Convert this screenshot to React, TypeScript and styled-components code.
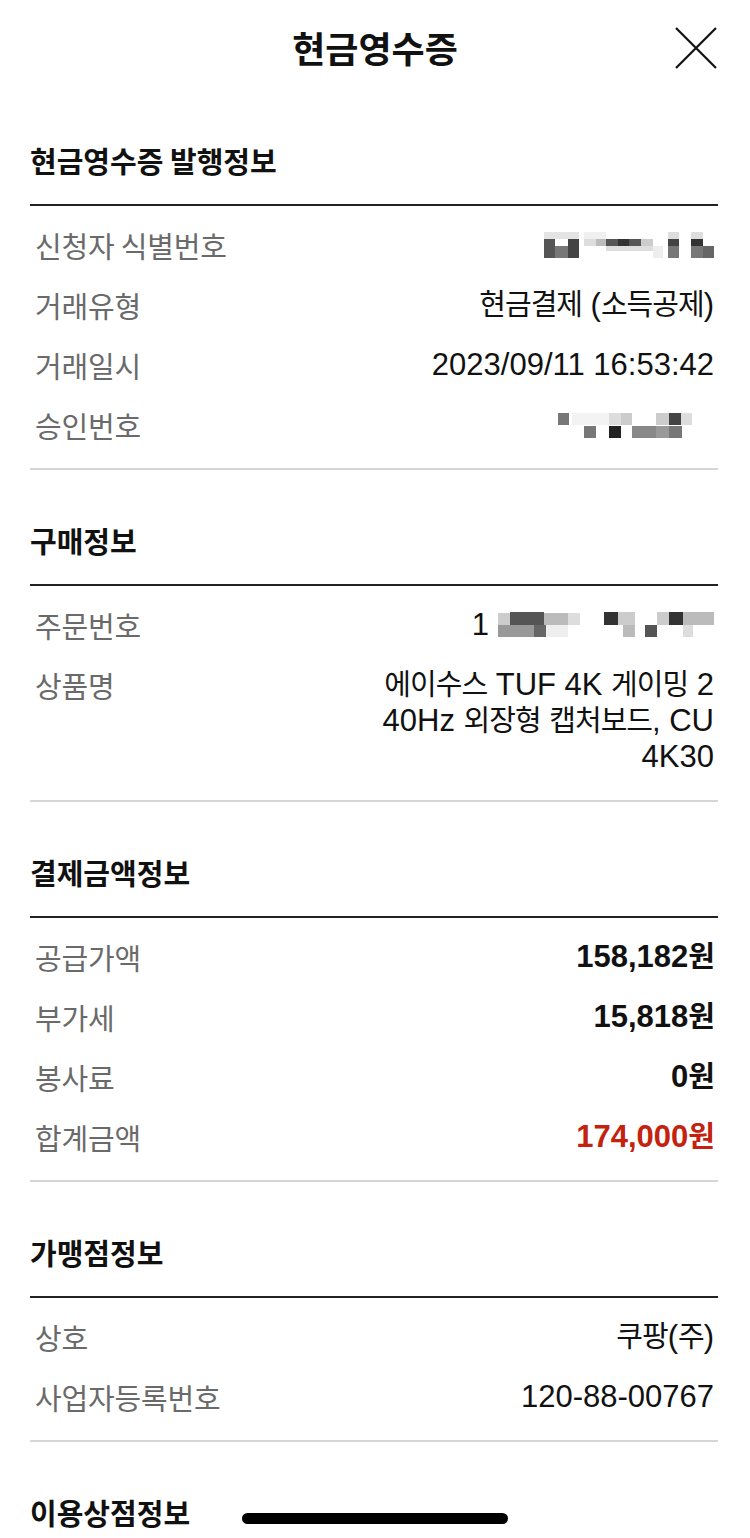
import React from "react";
import styled, { createGlobalStyle } from "styled-components";

const Global = createGlobalStyle`
  html, body { margin: 0; padding: 0; background: #fff; }
  body { font-family: "Noto Sans CJK KR", "Noto Sans", sans-serif; color: #111; }
  * { box-sizing: border-box; }
`;

const Page = styled.div`
  width: 750px;
  min-height: 1538px;
  background: #fff;
`;

const Header = styled.header`
  height: 90px;
  display: flex;
  align-items: center;
  justify-content: center;
  position: relative;
`;

const Title = styled.h1`
  margin: 0;
  font-family: "Noto Sans CJK KR", sans-serif;
  font-weight: 700;
  font-size: 36px;
  letter-spacing: 0;
  line-height: 44px;
  color: #111;
  margin-top: 4px;
`;

const CloseButton = styled.button`
  position: absolute;
  right: 32px;
  top: 26px;
  width: 44px;
  height: 44px;
  padding: 0;
  border: 0;
  background: transparent;
  display: flex;
  align-items: center;
  justify-content: center;
`;

const Section = styled.section`
  margin: 0 32px 0 30px;
  padding-top: 50px;
`;

const SectionTitle = styled.h2`
  margin: 0;
  font-family: "Noto Sans CJK KR", sans-serif;
  font-weight: 700;
  font-size: 29px;
  letter-spacing: 0;
  line-height: 40px;
  height: 66px;
  padding-bottom: 24px;
  border-bottom: 2px solid #222;
  color: #111;
`;

const RowList = styled.div<{ $last?: boolean }>`
  padding: 9px 0 13px;
  border-bottom: ${(p) => (p.$last ? "none" : "2px solid #d6d6d6")};
`;

const Row = styled.div`
  display: flex;
  justify-content: space-between;
  align-items: flex-start;
  padding: 12px 4px 12px 5px;
  line-height: 36px;
`;

const Label = styled.span`
  display: block;
  height: 36px;
  font-family: "Noto Sans CJK KR", sans-serif;
  font-size: 29px;
  line-height: 36px;
  letter-spacing: -0.2px;
  color: #6a6a6a;
  white-space: nowrap;
`;

const Value = styled.span<{ $bold?: boolean; $red?: boolean }>`
  font-family: "Liberation Sans", "Noto Sans CJK KR", sans-serif;
  font-size: 31px;
  font-weight: ${(p) => (p.$bold ? 700 : 400)};
  color: ${(p) => (p.$red ? "#c4220e" : "#111")};
  text-align: right;
  display: flex;
  flex-direction: column;
  align-items: flex-end;
`;

const Line = styled.span`
  display: block;
  height: 36px;
  line-height: 36px;
  white-space: nowrap;
`;

const Ko = styled.span`
  font-family: "Noto Sans CJK KR", sans-serif;
  font-size: 29px;
  letter-spacing: -1px;
  line-height: 1;
`;

const Masked = styled.span`
  display: flex;
  align-items: center;
  gap: 9px;
  height: 36px;
`;

const HomeIndicator = styled.div`
  position: fixed;
  left: 242px;
  bottom: 14px;
  width: 266px;
  height: 11px;
  border-radius: 6px;
  background: #000;
`;

type R = [number, number, number, number, string];

const Pixels: React.FC<{ w: number; h: number; rects: R[] }> = ({ w, h, rects }) => (
  <svg width={w} height={h} viewBox={`0 0 ${w} ${h}`} style={{ display: "block" }}>
    {rects.map(([x, y, rw, rh, c], i) => (
      <rect key={i} x={x} y={y} width={rw} height={rh} fill={c} />
    ))}
  </svg>
);

const idRects: R[] = [
  [0, 0, 35, 7, "#e4e4e4"],
  [40, 0, 22, 7, "#f0f0f0"],
  [0, 7, 11, 19, "#555"],
  [11, 14, 13, 12, "#777"],
  [24, 7, 11, 19, "#444"],
  [40, 7, 12, 7, "#ddd"],
  [52, 7, 10, 7, "#bbb"],
  [62, 7, 12, 7, "#555"],
  [74, 7, 11, 7, "#333"],
  [85, 7, 12, 7, "#555"],
  [97, 7, 12, 7, "#ccc"],
  [62, 14, 47, 5, "#ddd"],
  [109, 14, 10, 12, "#eee"],
  [124, 0, 11, 7, "#ddd"],
  [124, 7, 11, 7, "#444"],
  [124, 14, 11, 12, "#777"],
  [147, 0, 12, 7, "#ddd"],
  [147, 7, 12, 7, "#333"],
  [147, 14, 12, 12, "#777"],
  [159, 14, 11, 12, "#666"],
];

const approvalRects: R[] = [
  [0, 0, 11, 12, "#777"],
  [14, 0, 37, 12, "#f3f3f3"],
  [26, 13, 12, 12, "#777"],
  [51, 0, 12, 12, "#ddd"],
  [51, 13, 12, 12, "#222"],
  [63, 0, 11, 12, "#ccc"],
  [74, 13, 24, 12, "#888"],
  [98, 0, 13, 12, "#ccc"],
  [98, 13, 13, 12, "#999"],
  [111, 0, 12, 12, "#444"],
  [111, 13, 13, 12, "#777"],
  [123, 0, 11, 12, "#ddd"],
];

const orderRects: R[] = [
  [0, 1, 12, 12, "#ccc"],
  [12, 0, 34, 13, "#555"],
  [46, 1, 24, 12, "#bbb"],
  [70, 1, 12, 12, "#ddd"],
  [0, 13, 36, 12, "#999"],
  [36, 13, 12, 12, "#666"],
  [48, 13, 22, 12, "#eee"],
  [106, 0, 14, 13, "#333"],
  [120, 0, 17, 13, "#ccc"],
  [125, 13, 12, 12, "#bbb"],
  [147, 13, 12, 12, "#555"],
  [159, 0, 12, 13, "#ccc"],
  [171, 0, 14, 13, "#333"],
  [185, 0, 31, 13, "#bbb"],
  [185, 13, 10, 12, "#ddd"],
];

export default function App() {
  return (
    <Page>
      <Global />
      <Header>
        <Title>현금영수증</Title>
        <CloseButton aria-label="닫기">
          <svg width="42" height="42" viewBox="0 0 42 42">
            <path d="M1 1 L41 41 M41 1 L1 41" stroke="#111" strokeWidth="2.2" fill="none" />
          </svg>
        </CloseButton>
      </Header>

      <Section>
        <SectionTitle>현금영수증 발행정보</SectionTitle>
        <RowList>
          <Row>
            <Label>신청자 식별번호</Label>
            <Masked>
              <Pixels w={170} h={27} rects={idRects} />
            </Masked>
          </Row>
          <Row>
            <Label>거래유형</Label>
            <Value>
              <Line>
                <Ko>현금결제</Ko> (<Ko>소득공제</Ko>)
              </Line>
            </Value>
          </Row>
          <Row>
            <Label>거래일시</Label>
            <Value>
              <Line>2023/09/11 16:53:42</Line>
            </Value>
          </Row>
          <Row>
            <Label>승인번호</Label>
            <Masked style={{ marginRight: 22 }}>
              <Pixels w={134} h={25} rects={approvalRects} />
            </Masked>
          </Row>
        </RowList>
      </Section>

      <Section>
        <SectionTitle>구매정보</SectionTitle>
        <RowList>
          <Row>
            <Label>주문번호</Label>
            <Masked>
              <Value>
                <Line>1</Line>
              </Value>
              <Pixels w={216} h={26} rects={orderRects} />
            </Masked>
          </Row>
          <Row>
            <Label>상품명</Label>
            <Value>
              <Line>
                <Ko>에이수스</Ko> TUF 4K <Ko>게이밍</Ko> 2
              </Line>
              <Line>
                40Hz <Ko>외장형</Ko> <Ko>캡처보드</Ko>, CU
              </Line>
              <Line>4K30</Line>
            </Value>
          </Row>
        </RowList>
      </Section>

      <Section>
        <SectionTitle>결제금액정보</SectionTitle>
        <RowList>
          <Row>
            <Label>공급가액</Label>
            <Value $bold>
              <Line>
                158,182<Ko>원</Ko>
              </Line>
            </Value>
          </Row>
          <Row>
            <Label>부가세</Label>
            <Value $bold>
              <Line>
                15,818<Ko>원</Ko>
              </Line>
            </Value>
          </Row>
          <Row>
            <Label>봉사료</Label>
            <Value $bold>
              <Line>
                0<Ko>원</Ko>
              </Line>
            </Value>
          </Row>
          <Row>
            <Label>합계금액</Label>
            <Value $bold $red>
              <Line>
                174,000<Ko>원</Ko>
              </Line>
            </Value>
          </Row>
        </RowList>
      </Section>

      <Section>
        <SectionTitle>가맹점정보</SectionTitle>
        <RowList>
          <Row>
            <Label>상호</Label>
            <Value>
              <Line>
                <Ko>쿠팡</Ko>(<Ko>주</Ko>)
              </Line>
            </Value>
          </Row>
          <Row>
            <Label>사업자등록번호</Label>
            <Value>
              <Line>120-88-00767</Line>
            </Value>
          </Row>
        </RowList>
      </Section>

      <Section>
        <SectionTitle>이용상점정보</SectionTitle>
      </Section>

      <HomeIndicator />
    </Page>
  );
}
